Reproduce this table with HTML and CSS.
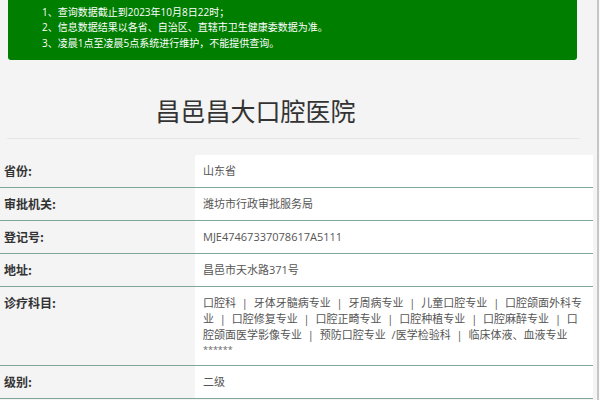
FILE: index.html
```html
<!DOCTYPE html>
<html lang="zh-CN">
<head>
<meta charset="utf-8">
<title>昌邑昌大口腔医院</title>
<link rel="stylesheet" href="styles.css">
</head>
<body>
<div class="frame">
  <div class="notice">
    <p>1、查询数据截止到2023年10月8日22时；</p>
    <p>2、信息数据结果以各省、自治区、直辖市卫生健康委数据为准。</p>
    <p>3、凌晨1点至凌晨5点系统进行维护，不能提供查询。</p>
  </div>
  <h1 class="title">昌邑昌大口腔医院</h1>
  <hr class="rule">
  <table class="info">
    <tr><th>省份:</th><td>山东省</td></tr>
    <tr><th>审批机关:</th><td>潍坊市行政审批服务局</td></tr>
    <tr><th>登记号:</th><td>MJE47467337078617A5111</td></tr>
    <tr><th>地址:</th><td>昌邑市天水路371号</td></tr>
    <tr><th>诊疗科目:</th><td class="subjects">口腔科 | 牙体牙髓病专业 | 牙周病专业 | 儿童口腔专业 | 口腔颌面外科专业 | 口腔修复专业 | 口腔正畸专业 | 口腔种植专业 | 口腔麻醉专业 | 口腔颌面医学影像专业 | 预防口腔专业 /医学检验科 | 临床体液、血液专业<span class="stars">******</span></td></tr>
    <tr><th>级别:</th><td>二级</td></tr>
  </table>
</div>
</body>
</html>
```
FILE: styles.css
```css
html, body {
  margin: 0;
  padding: 0;
  background: #fafafa;
}
body {
  font-family: "Open Sans", "Noto Sans CJK SC", sans-serif;
  font-size: 12px;
  color: #555;
  overflow: hidden;
}
.frame {
  width: 597px;
  height: 400px;
  background: #f4f4f4;
  border-right: 2px solid #c6c6c6;
  overflow: hidden;
}
.notice {
  margin: 0 20px 0 8px;
  padding: 4.5px 0 9px 34px;
  background: #007e00;
  color: #fff;
  font-size: 10px;
  border-radius: 0 0 3px 3px;
}
.notice p {
  margin: 0;
  line-height: 15.5px;
}
.title {
  margin: 0;
  padding: 32px 86px 0 0;
  height: 46px;
  text-align: center;
  font-family: "Noto Sans CJK SC", sans-serif;
  font-size: 25px;
  font-weight: normal;
  line-height: 36px;
  color: #333;
}
.rule {
  margin: 0 17px 0 7px;
  border: 0;
  border-top: 1px solid #e6e6e6;
}
.info {
  margin-top: 16px;
  width: 593px;
  border-collapse: collapse;
}
.info th, .info td {
  border-bottom: 1px solid #7fa797;
  line-height: 16px;
  padding: 8px;
  vertical-align: top;
  text-align: left;
}
.info th {
  width: 183px;
  padding-left: 4px;
  font-family: "Noto Sans CJK SC", sans-serif;
  font-size: 12px;
  font-weight: bold;
  color: #333;
  background: #f4f4f4;
}
.info td {
  background: #fff;
  color: #555;
  font-size: 11px;
}
.subjects {
  word-spacing: 3px;
}
.stars {
  display: block;
  font-size: 9px;
  line-height: 14px;
  color: #666;
}
```
